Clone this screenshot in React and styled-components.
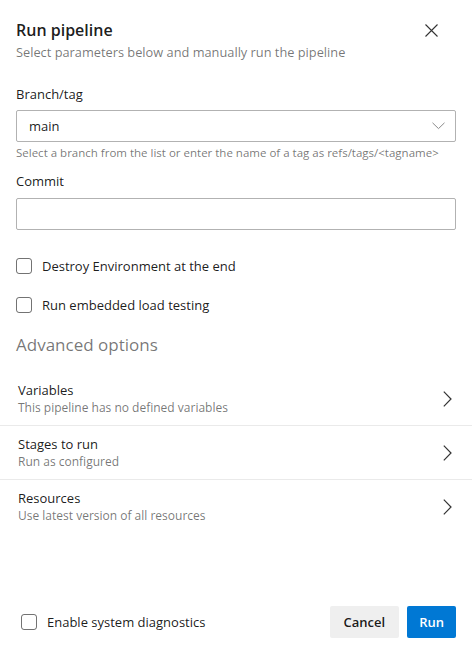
import React from "react";
import styled, { createGlobalStyle } from "styled-components";

const Global = createGlobalStyle`
  html, body { margin: 0; padding: 0; background: #fff; }
  body { font-family: "Open Sans", "Noto Sans", sans-serif; color: rgba(0,0,0,0.9); }
  * { box-sizing: border-box; }
`;

const Panel = styled.div`
  width: 472px;
  min-height: 651px;
  display: flex;
  flex-direction: column;
  background: #fff;
`;

const Header = styled.div`
  display: flex;
  align-items: flex-start;
  justify-content: space-between;
  padding: 18px 16px 0 16px;
`;

const TitleBlock = styled.div`
  display: flex;
  flex-direction: column;
`;

const Title = styled.div`
  font-size: 16px;
  font-weight: 600;
  line-height: 24px;
  color: rgba(0,0,0,0.9);
`;

const Subtitle = styled.div`
  font-size: 12.8px;
  line-height: 20px;
  color: rgba(0,0,0,0.55);
`;

const CloseButton = styled.button`
  border: none;
  background: none;
  padding: 0;
  margin: 5px 18px 0 0;
  width: 14px;
  height: 14px;
  display: flex;
  align-items: center;
  justify-content: center;
  cursor: pointer;
`;

const Body = styled.div`
  display: flex;
  flex-direction: column;
  padding: 22px 16px 0 16px;
`;

const Label = styled.div`
  font-size: 13px;
  line-height: 20px;
  color: rgba(0,0,0,0.9);
  margin-bottom: ${p => p.$mb || 6}px;
  margin-top: ${p => p.$mt || 0}px;
`;

const Field = styled.div`
  height: 32px;
  border: 1px solid rgba(0,0,0,0.3);
  border-radius: 2px;
  display: flex;
  align-items: center;
  justify-content: space-between;
  padding: 0 10px 0 12px;
  font-size: 13px;
  color: rgba(0,0,0,0.9);
`;

const Helper = styled.div`
  font-size: 11.5px;
  line-height: 16px;
  margin-top: 3px;
  color: rgba(0,0,0,0.55);
`;

const CheckRow = styled.label`
  display: flex;
  align-items: center;
  gap: 10px;
  height: 20px;
  font-size: 13px;
  color: rgba(0,0,0,0.9);
  margin-top: ${p => p.$mt || 0}px;
  margin-left: ${p => p.$ml || 0}px;
`;

const Box = styled.span`
  width: 16px;
  height: 16px;
  border: 1px solid rgba(0,0,0,0.55);
  border-radius: 3px;
  flex: none;
`;

const SectionTitle = styled.div`
  font-size: 17px;
  line-height: 24px;
  font-weight: 400;
  color: rgba(0,0,0,0.55);
  margin-top: 18px;
`;

const List = styled.div`
  display: flex;
  flex-direction: column;
  margin-top: 15px;
`;

const Row = styled.div`
  display: flex;
  align-items: center;
  justify-content: space-between;
  padding: 9px 20px 8px 18px;
  border-top: ${p => (p.$first ? "none" : "1px solid #eaeaea")};
`;

const RowText = styled.div`
  display: flex;
  flex-direction: column;
`;

const RowTitle = styled.div`
  font-size: 13px;
  line-height: 18px;
  color: rgba(0,0,0,0.9);
`;

const RowSub = styled.div`
  font-size: 12px;
  line-height: 18px;
  color: rgba(0,0,0,0.55);
`;

const Footer = styled.div`
  margin-top: auto;
  display: flex;
  align-items: center;
  justify-content: space-between;
  padding: 0 16px 13px 16px;
`;

const Buttons = styled.div`
  display: flex;
  gap: 8px;
`;

const Button = styled.button`
  height: 32px;
  border: none;
  border-radius: 2px;
  padding: 0 ${p => (p.$primary ? 12 : 14)}px;
  font-family: inherit;
  font-size: 13px;
  font-weight: 600;
  background: ${p => (p.$primary ? "#0078d4" : "#efefef")};
  color: ${p => (p.$primary ? "#fff" : "rgba(0,0,0,0.9)")};
  cursor: pointer;
`;

const Chevron = ({ dir }) =>
  dir === "down" ? (
    <svg width="13" height="8" viewBox="0 0 13 8">
      <path d="M0.5 0.8 L6.5 6.6 L12.5 0.8" fill="none" stroke="#8a8a8a" strokeWidth="1" />
    </svg>
  ) : (
    <svg width="9" height="16" viewBox="0 0 9 16">
      <path d="M0.8 0.6 L8 8 L0.8 15.4" fill="none" stroke="#333" strokeWidth="1.2" />
    </svg>
  );

const rows = [
  { t: "Variables", s: "This pipeline has no defined variables" },
  { t: "Stages to run", s: "Run as configured" },
  { t: "Resources", s: "Use latest version of all resources" },
];

export default function App() {
  return (
    <Panel>
      <Global />
      <Header>
        <TitleBlock>
          <Title>Run pipeline</Title>
          <Subtitle>Select parameters below and manually run the pipeline</Subtitle>
        </TitleBlock>
        <CloseButton aria-label="Close">
          <svg width="13" height="13" viewBox="0 0 13 13">
            <path d="M0.5 0.5 L12.5 12.5 M12.5 0.5 L0.5 12.5" stroke="#333" strokeWidth="1.1" />
          </svg>
        </CloseButton>
      </Header>
      <Body>
        <Label>Branch/tag</Label>
        <Field>
          <span>main</span>
          <Chevron dir="down" />
        </Field>
        <Helper>Select a branch from the list or enter the name of a tag as refs/tags/&lt;tagname&gt;</Helper>
        <Label $mt={10} $mb={7}>Commit</Label>
        <Field />
        <CheckRow $mt={26}>
          <Box />
          Destroy Environment at the end
        </CheckRow>
        <CheckRow $mt={19}>
          <Box />
          Run embedded load testing
        </CheckRow>
        <SectionTitle>Advanced options</SectionTitle>
      </Body>
      <List>
        {rows.map((r, i) => (
          <Row key={r.t} $first={i === 0}>
            <RowText>
              <RowTitle>{r.t}</RowTitle>
              <RowSub>{r.s}</RowSub>
            </RowText>
            <Chevron dir="right" />
          </Row>
        ))}
      </List>
      <Footer>
        <CheckRow $ml={5}>
          <Box />
          Enable system diagnostics
        </CheckRow>
        <Buttons>
          <Button>Cancel</Button>
          <Button $primary>Run</Button>
        </Buttons>
      </Footer>
    </Panel>
  );
}
